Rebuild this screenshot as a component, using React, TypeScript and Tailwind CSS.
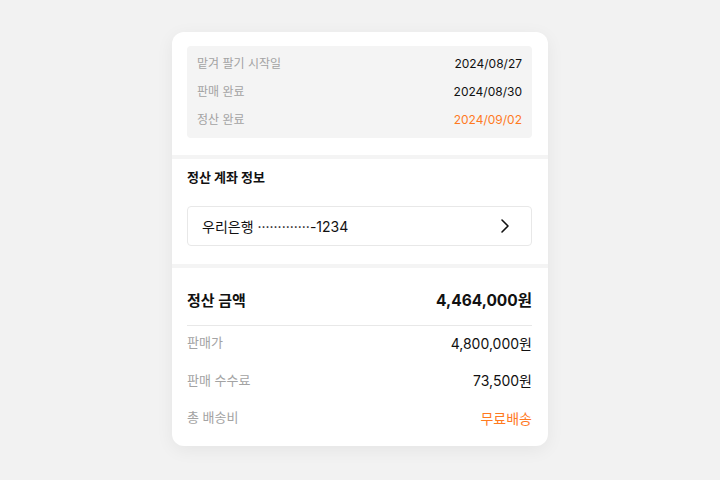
import { ChevronRight } from "lucide-react";

const font = { fontFamily: 'Inter, "Noto Sans CJK KR", sans-serif' };

const dates = [
  { label: "맡겨 팔기 시작일", value: "2024/08/27" },
  { label: "판매 완료", value: "2024/08/30" },
  { label: "정산 완료", value: "2024/09/02", highlight: true },
];

const amounts = [
  { label: "판매가", value: "4,800,000원" },
  { label: "판매 수수료", value: "73,500원" },
  { label: "총 배송비", value: "무료배송", highlight: true },
];

export default function App() {
  return (
    <div className="min-h-[480px] w-full bg-[#f2f2f2] flex justify-center pt-[32px]" style={font}>
      <div className="w-[376px] h-[414px] bg-white rounded-[12px] shadow-[0_4px_18px_rgba(0,0,0,0.06)] overflow-hidden">
        {/* 진행 일정 */}
        <div className="pl-[15px] pr-[16px] pt-[14px] pb-[17px]">
          <div className="bg-[#f4f4f4] rounded-[4px] px-[10px] py-[4px]">
            {dates.map((d) => (
              <div key={d.label} className="h-[28px] flex items-center justify-between text-[12px]">
                <span className="text-[#a3a3a3]">{d.label}</span>
                <span className={d.highlight ? "text-[#ff7a1f]" : "text-[#111]"}>{d.value}</span>
              </div>
            ))}
          </div>
        </div>

        <div className="h-[4px] bg-[#f4f4f4]" />

        {/* 정산 계좌 정보 */}
        <div className="pl-[15px] pr-[16px] pt-[10px] pb-[18px]">
          <div className="h-[16px] leading-[16px] text-[13px] font-bold text-[#111]">정산 계좌 정보</div>
          <div className="mt-[21px] h-[40px] border border-[#e8e8e8] rounded-[4px] flex items-center justify-between pl-[14px] pr-[14px]">
            <span className="text-[14px] text-[#111]">우리은행 ·············-1234</span>
            <ChevronRight className="w-6 h-6 text-[#111]" strokeWidth={1.6} />
          </div>
        </div>

        <div className="h-[4px] bg-[#f4f4f4]" />

        {/* 정산 금액 */}
        <div className="pl-[15px] pr-[16px] pt-[22px] pb-[18px]">
          <div className="h-[22px] flex items-center justify-between text-[#111]">
            <span className="text-[15px] font-bold">정산 금액</span>
            <span className="text-[15.5px] font-bold">4,464,000원</span>
          </div>
          <div className="mt-[13px] h-px bg-[#e8e8e8]" />
          <div className="mt-[7px] flex flex-col gap-[17.5px]">
            {amounts.map((a) => (
              <div key={a.label} className="h-[20px] flex items-center justify-between">
                <span className="text-[13px] text-[#a3a3a3]">{a.label}</span>
                <span className={`text-[14px] ${a.highlight ? "text-[#ff7a1f]" : "text-[#111]"}`}>{a.value}</span>
              </div>
            ))}
          </div>
        </div>
      </div>
    </div>
  );
}
